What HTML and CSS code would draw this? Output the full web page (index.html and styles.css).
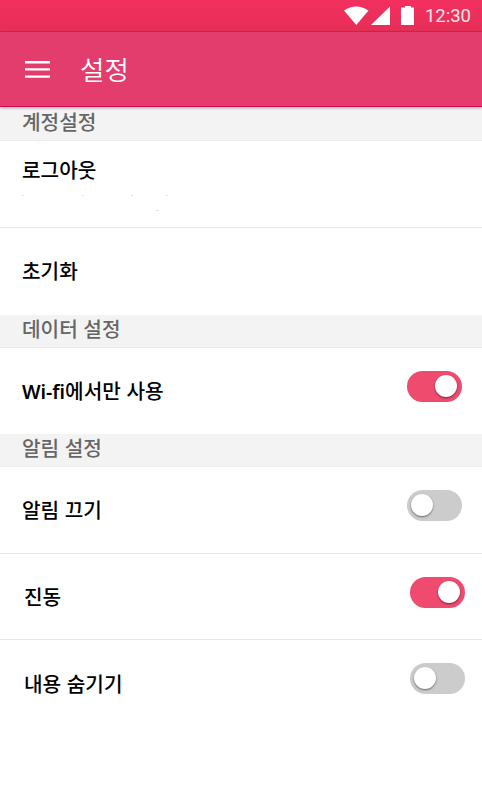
FILE: index.html
```
<!DOCTYPE html>
<html lang="ko">
<head>
    <meta charset="UTF-8">
    <title>설정</title>
    <link rel="stylesheet" href="styles.css">
</head>
<body>

<div class="status-bar">
    <svg class="status-icons" width="72" height="20" viewBox="0 0 72 20" fill="#fff">
        <path d="M0 4.5Q12 -3.5 24.5 4.5L12.3 19Z"/>
        <path d="M46 0.5V19H27Z"/>
        <path d="M57 1.5H61V0H67V1.5H70V19H57Z"/>
    </svg>
    <span class="time">12:30</span>
</div>

<header class="app-bar">
    <svg class="menu" width="25" height="17" viewBox="0 0 25 17" fill="#fff">
        <path d="M0 0h25v2.4H0zM0 7.2h25v2.4H0zM0 14.4h25v2.4H0z"/>
    </svg>
    <h1>설정</h1>
</header>

<main>
    <h2 class="first">계정설정</h2>
    <ul>
        <li class="logout">
            <span>로그아웃</span>
            <svg class="detail" width="150" height="17" viewBox="0 0 150 17" fill="#e2e2e2">
                <path d="M0 0h2v1H0zM60 0h2v1h-2zM109 0h2v1h-2zM144 0h2v1h-2zM134 15h3v1h-3z"/>
                <path fill="#f2f2f2" d="M9 15h1v1H9z"/>
            </svg>
        </li>
        <li><span>초기화</span></li>
    </ul>

    <h2>데이터 설정</h2>
    <ul>
        <li><span><b>Wi-fi</b>에서만 사용</span><i class="switch on"></i></li>
    </ul>

    <h2>알림 설정</h2>
    <ul>
        <li><span>알림 끄기</span><i class="switch"></i></li>
        <li class="sub"><span>진동</span><i class="switch on"></i></li>
        <li class="sub"><span>내용 숨기기</span><i class="switch"></i></li>
    </ul>
</main>

</body>
</html>
```
FILE: styles.css
```
* {
    box-sizing: border-box;
}

body {
    margin: 0;
    height: 800px;
    overflow: hidden;
    background: #fff;
    color: #000;
    font-family: "Noto Sans CJK KR", sans-serif;
}

h1,
h2,
ul {
    margin: 0;
    padding: 0;
}

ul {
    list-style: none;
}

.status-bar {
    display: flex;
    justify-content: flex-end;
    height: 32px;
    padding-right: 11px;
    background: linear-gradient(#f2305f, #e62e57);
    border-bottom: 1px solid #c22e56;
}

.status-icons {
    margin: 6px 9px 0 0;
}

.time {
    color: #fce4e9;
    font: 18.5px/33px Roboto, sans-serif;
}

.app-bar {
    position: relative;
    display: flex;
    align-items: center;
    height: 75px;
    padding-left: 25px;
    background: #e33d6d;
    border-bottom: 1px solid #da0758;
    box-shadow: 0 1px 3px rgba(0, 0, 0, .3);
}

.app-bar h1 {
    margin-left: 30px;
    color: #fff;
    font-size: 26.5px;
    font-weight: 350;
    line-height: 38px;
}

h2 {
    height: 33px;
    padding-left: 22px;
    background: #f3f3f3;
    border-bottom: 1px solid #ececec;
    color: #666;
    font-size: 20.2px;
    font-weight: 500;
    line-height: 27px;
}

h2.first {
    height: 34px;
    line-height: 30px;
}

li {
    display: flex;
    align-items: center;
    justify-content: space-between;
    height: 86px;
    padding: 0 20px 0 22px;
    font-size: 20.2px;
    font-weight: 500;
    line-height: 30px;
}

li + li {
    border-top: 1px solid #e8e8e8;
}

li b {
    font-family: "Noto Sans", sans-serif;
    font-size: 19.5px;
    font-weight: 600;
}

.logout {
    flex-direction: column;
    align-items: flex-start;
    justify-content: flex-start;
    padding-top: 14px;
}

.logout + li {
    height: 88px;
    padding-bottom: 2px;
}

.detail {
    margin-top: 10px;
}

.sub {
    padding: 1px 17px 0 24px;
}

.sub:last-child {
    height: 87px;
}

.switch {
    width: 55px;
    height: 31px;
    margin-top: -10px;
    padding: 4px;
    border-radius: 16px;
    background: #ccc;
}

.switch::before {
    content: '';
    display: block;
    width: 22px;
    height: 22px;
    border-radius: 50%;
    background: #fff;
    box-shadow: 0 1px 2px rgba(0, 0, 0, .5);
}

.switch.on {
    background: #ee4b6f;
}

.switch.on::before {
    margin-left: 24px;
}
```
